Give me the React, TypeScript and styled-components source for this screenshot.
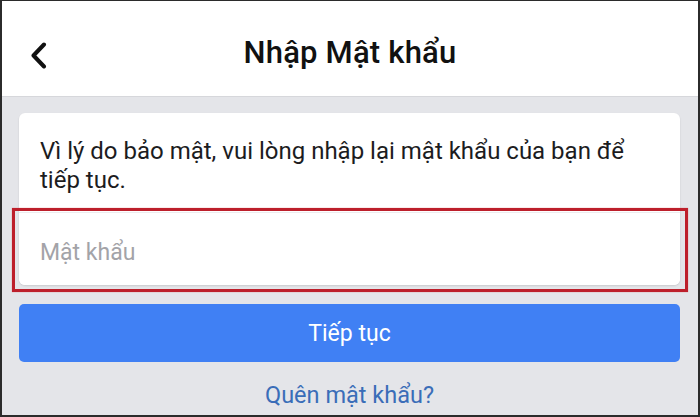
import React from 'react';
import styled, { createGlobalStyle } from 'styled-components';

const GlobalStyle = createGlobalStyle`
  html, body {
    margin: 0;
    padding: 0;
    background: #e4e5e9;
  }
  * {
    box-sizing: border-box;
  }
`;

const Frame = styled.div`
  width: 700px;
  height: 417px;
  border: 2px solid #2b2b2b;
  border-top-width: 1px;
  background-color: #e4e5e9;
  font-family: 'Roboto', 'Liberation Sans', sans-serif;
  display: flex;
  flex-direction: column;
  overflow: hidden;
`;

const Header = styled.header`
  height: 96px;
  flex-shrink: 0;
  background-color: #ffffff;
  border-bottom: 1px solid #d6d7db;
  display: grid;
  grid-template-columns: 1fr auto 1fr;
  align-items: center;
  padding: 0 28px;
`;

const BackButton = styled.button`
  justify-self: start;
  background: transparent;
  border: none;
  padding: 0;
  margin-top: 14px;
  display: flex;
  cursor: pointer;
`;

const Title = styled.h1`
  margin: 8px 0 0;
  font-size: 31px;
  font-weight: 500;
  color: #111111;
  letter-spacing: 0.2px;
`;

const Body = styled.main`
  flex: 1;
  padding: 16px 18px 0 17px;
  display: flex;
  flex-direction: column;
`;

const Card = styled.section`
  background-color: #ffffff;
  border-radius: 6px;
  box-shadow: 0 1px 2px rgba(0, 0, 0, 0.12);
`;

const Message = styled.p`
  margin: 0;
  padding: 24px 40px 17px 21px;
  font-size: 24px;
  line-height: 29px;
  color: #1c1c1e;
`;

const Highlight = styled.div`
  position: relative;

  &::after {
    content: '';
    position: absolute;
    top: -4px;
    bottom: -7px;
    left: -7px;
    right: -8px;
    border: 3px solid #bd1f2b;
    box-shadow: 0 0 1px rgba(220, 60, 60, 0.6);
    pointer-events: none;
  }
`;

const PasswordInput = styled.input`
  display: block;
  width: 100%;
  height: 73px;
  border: none;
  border-top: 1px solid #ececee;
  border-radius: 0 0 6px 6px;
  padding: 7px 21px 0;
  font-family: inherit;
  font-size: 23px;
  color: #1c1c1e;
  background: #ffffff;
  outline: none;

  &::placeholder {
    color: #a3a3a8;
  }
`;

const SubmitButton = styled.button`
  margin-top: 19px;
  height: 58px;
  border: none;
  border-radius: 5px;
  background-color: #4080f4;
  color: #ffffff;
  font-family: inherit;
  font-size: 23px;
  cursor: pointer;
`;

const ForgotLink = styled.a`
  margin-top: 19px;
  align-self: center;
  font-size: 23.5px;
  color: #3a6db8;
  text-decoration: none;
  cursor: pointer;
`;

const ChevronLeft: React.FC = () => (
  <svg width="17" height="27" viewBox="0 0 17 27" fill="none">
    <polyline
      points="14,2.5 3.5,13.5 14,24.5"
      stroke="#111111"
      strokeWidth="4"
      strokeLinecap="round"
      strokeLinejoin="round"
    />
  </svg>
);

const App: React.FC = () => {
  return (
    <>
      <GlobalStyle />
      <Frame>
        <Header>
          <BackButton aria-label="Quay lại">
            <ChevronLeft />
          </BackButton>
          <Title>Nhập Mật khẩu</Title>
          <span />
        </Header>

        <Body>
          <Card>
            <Message>
              Vì lý do bảo mật, vui lòng nhập lại mật khẩu của bạn để tiếp tục.
            </Message>
            <Highlight>
              <PasswordInput type="password" placeholder="Mật khẩu" />
            </Highlight>
          </Card>

          <SubmitButton>Tiếp tục</SubmitButton>
          <ForgotLink>Quên mật khẩu?</ForgotLink>
        </Body>
      </Frame>
    </>
  );
};

export default App;
